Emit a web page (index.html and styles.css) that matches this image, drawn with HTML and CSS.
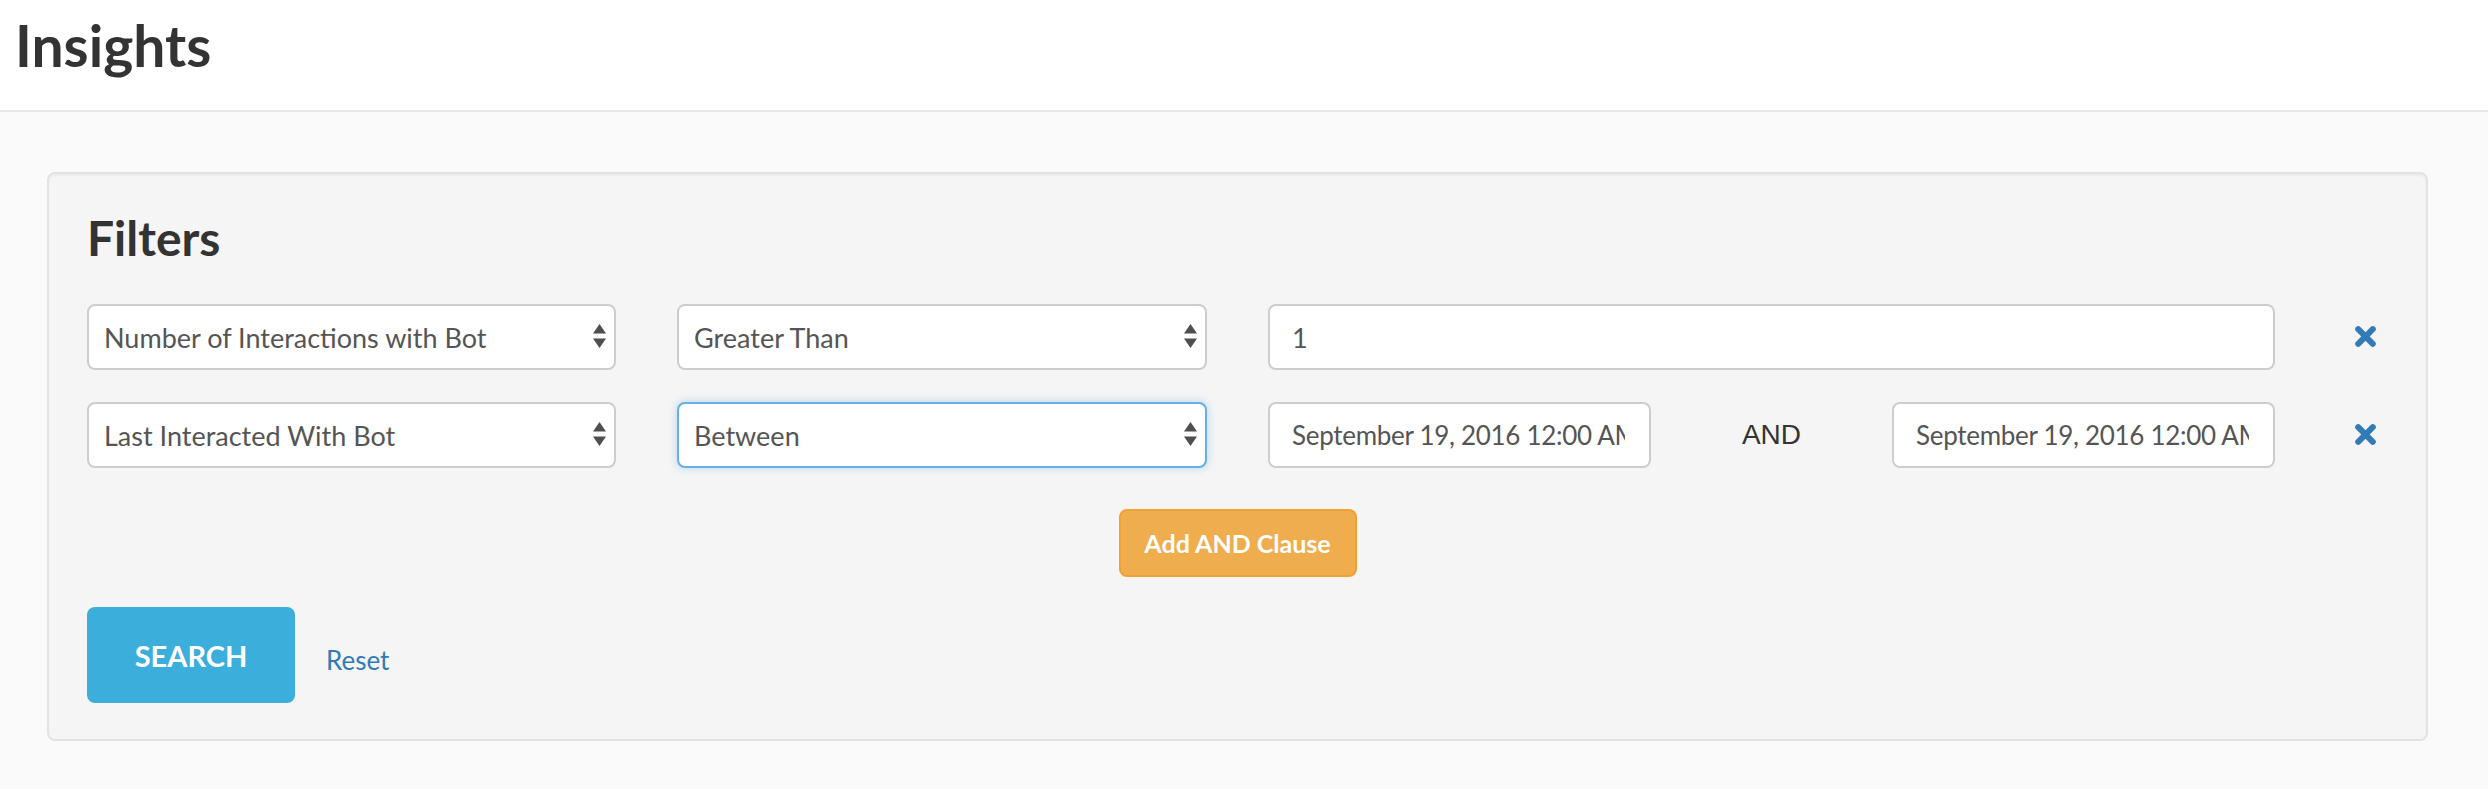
FILE: index.html
```html
<!DOCTYPE html>
<html lang="en">
<head>
<meta charset="utf-8">
<title>Insights</title>
<link rel="stylesheet" href="styles.css">
</head>
<body>
<header class="topbar">
  <h1 class="page-title">Insights</h1>
</header>
<main class="page">
  <section class="well">
    <h3 class="well-title">Filters</h3>
    <div class="filter-grid">
      <div class="fake-select">
        <span class="fake-select-text">Number of Interactions with Bot</span>
        <svg class="caret" viewBox="0 0 13 24" width="13" height="24"><path d="M0 9.5 L6.5 0 L13 9.5Z"/><path d="M0 14.5 L13 14.5 L6.5 24Z"/></svg>
      </div>
      <div class="fake-select">
        <span class="fake-select-text">Greater Than</span>
        <svg class="caret" viewBox="0 0 13 24" width="13" height="24"><path d="M0 9.5 L6.5 0 L13 9.5Z"/><path d="M0 14.5 L13 14.5 L6.5 24Z"/></svg>
      </div>
      <div class="value-cell">
        <input class="text-input full" type="text" value="1">
      </div>
      <div class="remove-cell">
        <svg class="remove-icon" viewBox="0 0 21 21" width="21" height="21"><path d="M3.2 3.2 L17.8 17.8 M17.8 3.2 L3.2 17.8"/></svg>
      </div>

      <div class="fake-select">
        <span class="fake-select-text">Last Interacted With Bot</span>
        <svg class="caret" viewBox="0 0 13 24" width="13" height="24"><path d="M0 9.5 L6.5 0 L13 9.5Z"/><path d="M0 14.5 L13 14.5 L6.5 24Z"/></svg>
      </div>
      <div class="fake-select is-focused">
        <span class="fake-select-text">Between</span>
        <svg class="caret" viewBox="0 0 13 24" width="13" height="24"><path d="M0 9.5 L6.5 0 L13 9.5Z"/><path d="M0 14.5 L13 14.5 L6.5 24Z"/></svg>
      </div>
      <div class="value-cell range">
        <input class="text-input date" type="text" value="September 19, 2016 12:00 AM">
        <span class="and-label">AND</span>
        <input class="text-input date" type="text" value="September 19, 2016 12:00 AM">
      </div>
      <div class="remove-cell">
        <svg class="remove-icon" viewBox="0 0 21 21" width="21" height="21"><path d="M3.2 3.2 L17.8 17.8 M17.8 3.2 L3.2 17.8"/></svg>
      </div>
    </div>
    <div class="clause-row">
      <button class="btn-warning" type="button">Add AND Clause</button>
    </div>
    <div class="actions">
      <button class="btn-search" type="button">SEARCH</button>
      <a class="reset-link" href="#">Reset</a>
    </div>
  </section>
</main>
</body>
</html>
```
FILE: styles.css
```css
html, body {
  margin: 0;
  padding: 0;
}
body {
  background: #fafafa;
  font-family: Lato, "Noto Sans", sans-serif;
  color: #555;
  width: 2488px;
  min-height: 789px;
}
.topbar {
  background: #ffffff;
  height: 98px;
  padding: 12px 0 0 15px;
  border-bottom: 2px solid #e6e7e9;
}
.page-title {
  margin: 0;
  font-family: Lato, sans-serif;
  font-weight: 700;
  font-size: 57px;
  line-height: 66px;
  color: #333;
}
.page {
  padding: 60px 60px 40px 47px;
}
.well {
  background: #f5f5f5;
  border: 2px solid #e3e3e3;
  border-radius: 8px;
  box-shadow: inset 0 2px 2px rgba(0,0,0,0.04);
  padding: 38px 38px 36px 38px;
}
.well-title {
  margin: 0 0 40px 0;
  font-family: Lato, sans-serif;
  font-weight: 700;
  font-size: 48px;
  line-height: 52px;
  color: #333;
}
.filter-grid {
  display: grid;
  grid-template-columns: 529px 530px 1007px 1fr;
  grid-auto-rows: 66px;
  column-gap: 61px;
  row-gap: 32px;
}
.fake-select {
  box-sizing: border-box;
  display: flex;
  align-items: center;
  justify-content: space-between;
  background: #fff;
  border: 2px solid #cdcdcd;
  border-radius: 8px;
  padding: 0 8px 0 15px;
  font-size: 27px;
  color: #555;
}
.fake-select.is-focused {
  border-color: #66afe9;
  box-shadow: 0 0 10px rgba(102,175,233,0.45);
}
.fake-select-text {
  white-space: nowrap;
}
.caret {
  fill: #4f4f4f;
  margin-top: -2px;
}
.value-cell {
  display: flex;
}
.value-cell.range {
  justify-content: space-between;
  align-items: center;
}
.text-input {
  box-sizing: border-box;
  height: 66px;
  background: #fff;
  border: 2px solid #cdcdcd;
  border-radius: 8px;
  padding: 0 22px;
  font-family: Lato, sans-serif;
  font-size: 27px;
  color: #555;
  outline: none;
  margin: 0;
}
.text-input.full {
  width: 1007px;
}
.text-input.date {
  width: 383px;
  padding-right: 24px;
  font-size: 26px;
  letter-spacing: -0.3px;
}
.and-label {
  flex: 1;
  text-align: center;
  font-family: "Liberation Sans", Arial, sans-serif;
  font-size: 28px;
  color: #333;
}
.remove-cell {
  display: flex;
  align-items: center;
  padding-left: 19px;
}
.remove-icon {
  stroke: #337ab7;
  stroke-width: 6;
  stroke-linecap: round;
  fill: none;
  margin-top: -1px;
}
.clause-row {
  display: flex;
  justify-content: center;
  margin-top: 41px;
}
.btn-warning {
  box-sizing: border-box;
  height: 68px;
  width: 238px;
  background: #f0ad4e;
  border: 2px solid #eea236;
  border-radius: 8px;
  color: #fff;
  font-family: Lato, sans-serif;
  font-weight: 700;
  font-size: 25px;
  padding: 0;
}
.actions {
  display: flex;
  align-items: center;
  margin-top: 30px;
}
.btn-search {
  width: 208px;
  height: 96px;
  background: #3caedb;
  border: none;
  border-radius: 8px;
  color: #fff;
  font-family: Lato, sans-serif;
  font-weight: 700;
  font-size: 29px;
  padding: 0;
}
.reset-link {
  margin-left: 31px;
  margin-top: 9px;
  font-size: 26px;
  color: #337ab7;
  text-decoration: none;
}
```
